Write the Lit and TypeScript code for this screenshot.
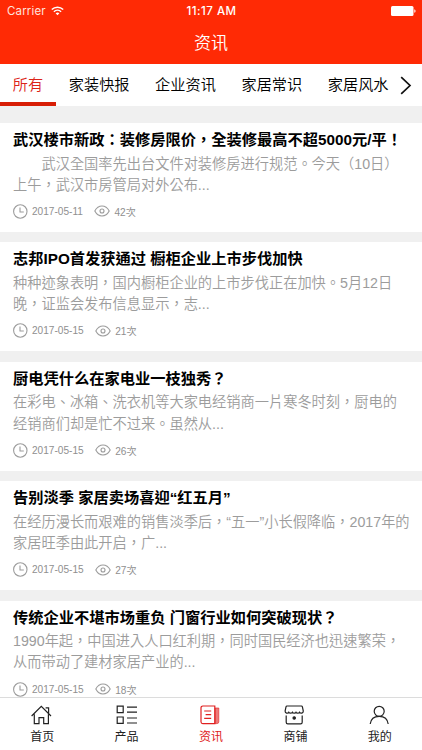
import { LitElement, html, css, svg } from "lit";
import { customElement, property } from "lit/decorators.js";
import { classMap } from "lit/directives/class-map.js";

interface Article {
  title: string;
  lines: string[];
  date: string;
  views: number;
}

const TABS = ["所有", "家装快报", "企业资讯", "家居常识", "家居风水"];

const ARTICLES: Article[] = [
  {
    title: "武汉楼市新政：装修房限价，全装修最高不超5000元/平！",
    lines: ["\u3000\u3000武汉全国率先出台文件对装修房进行规范。今天（10日）", "上午，武汉市房管局对外公布..."],
    date: "2017-05-11",
    views: 42,
  },
  {
    title: "志邦IPO首发获通过 橱柜企业上市步伐加快",
    lines: ["种种迹象表明，国内橱柜企业的上市步伐正在加快。5月12日", "晚，证监会发布信息显示，志..."],
    date: "2017-05-15",
    views: 21,
  },
  {
    title: "厨电凭什么在家电业一枝独秀？",
    lines: ["在彩电、冰箱、洗衣机等大家电经销商一片寒冬时刻，厨电的", "经销商们却是忙不过来。虽然从..."],
    date: "2017-05-15",
    views: 26,
  },
  {
    title: "告别淡季 家居卖场喜迎“红五月”",
    lines: ["在经历漫长而艰难的销售淡季后，“五一”小长假降临，2017年的", "家居旺季由此开启，广..."],
    date: "2017-05-15",
    views: 27,
  },
  {
    title: "传统企业不堪市场重负 门窗行业如何突破现状？",
    lines: ["1990年起，中国进入人口红利期，同时国民经济也迅速繁荣，", "从而带动了建材家居产业的..."],
    date: "2017-05-15",
    views: 18,
  },
];

const NAV = [
  {
    label: "首页",
    icon: svg`<path d="M.6 11 10.3 1.300 20 11M14.600 2.800h3v5.600M3.300 9.200v9.500h4.700v-6h4.700v6h4.700V9.200"/>`,
  },
  {
    label: "产品",
    icon: svg`<path d="M1.200 1.200h6v6.400h-6zM1.200 12h6v6.400h-6zM11 2.200h10M11 7.200h10M11 13h10M11 18h10"/>`,
  },
  {
    label: "资讯",
    icon: svg`<path d="M2.800 1h12v17.600h-12a1.800 1.800 0 0 1-1.800-1.800V2.800A1.800 1.800 0 0 1 2.800 1zM4.200 6h7M5.600 9.600h5.600M4.200 13.400h7"/><path d="M15 3h3.800v13.800a1.800 1.800 0 0 1-1.800 1.800h-2z" fill="currentColor" fill-opacity=".6" stroke-width=".6"/>`,
  },
  {
    label: "商铺",
    icon: svg`<path d="M3 1h14.400q.8 0 1 .8l.9 4.300a2 2 0 0 1-3.700 1.100 2.100 2.100 0 0 1-3.600 0 2.100 2.100 0 0 1-3.600 0 2.100 2.100 0 0 1-3.600 0A2 2 0 0 1 1.100 6.100L2 1.800Q2.200 1 3 1zM2.200 10.400v6.800q0 1.600 1.600 1.600h12.800q1.600 0 1.600-1.600v-6.800"/><circle cx="10.200" cy="13" r="1.200" fill="currentColor"/>`,
  },
  {
    label: "我的",
    icon: svg`<circle cx="10.200" cy="6.300" r="5"/><path d="M1.200 19c.6-5 4.200-7.700 9-7.700s8.400 2.700 9 7.700"/>`,
  },
];

@customElement("news-card")
export class NewsCard extends LitElement {
  @property({ attribute: false }) article!: Article;

  static styles = css`
    :host {
      display: block;
      box-sizing: border-box;
      height: 109px;
      padding: 5px 0 0 13px;
      background: #fff;
      white-space: nowrap;
      overflow: hidden;
      flex: none;
    }
    .title {
      height: 25.5px;
      line-height: 23px;
      font-size: 15.25px;
      font-weight: 700;
      color: #000;
    }
    .line {
      height: 21.4px;
      line-height: 21.4px;
      font-size: 14.22px;
      font-weight: 350;
      color: #9c9c9c;
    }
    .meta {
      display: flex;
      align-items: center;
      height: 16px;
      margin-top: 7.2px;
      font-size: 10.1px;
      color: #8f8f8f;
    }
    .meta svg {
      fill: none;
      stroke: #9c9c9c;
      stroke-width: 1.1;
      flex: none;
    }
    .date {
      margin: 0 11.5px 0 4px;
    }
    .views {
      margin-left: 4px;
    }
  `;

  render() {
    const a = this.article;
    return html`
      <div class="title">${a.title}</div>
      ${a.lines.map((l) => html`<div class="line">${l}</div>`)}
      <div class="meta">
        <svg width="15" height="15" viewBox="0 0 15 15">
          <circle cx="7.300" cy="7.500" r="6.700" />
          <path d="M7 3.600v4.400h3.800" />
        </svg>
        <span class="date">${a.date}</span>
        <svg width="16" height="12" viewBox="0 0 16 12">
          <path d="M.8 6C4.300-.600 11.700-.600 15.200 6 11.700 12.600 4.300 12.600.8 6z" />
          <circle cx="8" cy="6" r="2" />
        </svg>
        <span class="views">${a.views}次</span>
      </div>
    `;
  }
}

@customElement("app-root")
export class AppRoot extends LitElement {
  static styles = css`
    :host {
      display: flex;
      flex-direction: column;
      width: 422px;
      height: 750px;
      overflow: hidden;
      background: #f0f0f0;
      font-family: "Liberation Sans", "Noto Sans CJK TC", sans-serif;
    }
    .header {
      flex: none;
      height: 64px;
      background: #ff2a05;
      color: #fff;
    }
    .status {
      display: grid;
      grid-template-columns: 1fr auto 1fr;
      align-items: center;
      height: 22px;
      padding: 0 6px 0 7px;
      font: 400 11.5px/22px Inter, sans-serif;
    }
    .carrier {
      display: flex;
      align-items: center;
      gap: 5px;
      letter-spacing: 0.15px;
      color: #ffe3dd;
    }
    .time {
      font-weight: 500;
      letter-spacing: 0.5px;
    }
    .battery {
      justify-self: end;
      display: block;
    }
    .heading {
      height: 42px;
      line-height: 43px;
      text-align: center;
      font-size: 17px;
      font-weight: 350;
    }
    .tabs {
      flex: none;
      display: flex;
      height: 42px;
      background: #fff;
      overflow: hidden;
    }
    .tab {
      flex: none;
      box-sizing: border-box;
      height: 42px;
      padding: 0 12.8px;
      line-height: 42px;
      font-size: 15.2px;
      font-weight: 350;
      color: #000;
    }
    .tab.active {
      color: #dc2418;
      border-bottom: 4px solid #d81e06;
    }
    .more {
      flex: none;
      margin: 12px 0 0 -1px;
    }
    .list {
      flex: 1;
      min-height: 0;
      overflow: hidden;
      display: flex;
      flex-direction: column;
      gap: 10.4px;
      padding-top: 17px;
    }
    .nav {
      flex: none;
      box-sizing: border-box;
      display: flex;
      height: 53px;
      border-top: 1px solid #dcdcdc;
      background: #fff;
    }
    .item {
      flex: 1;
      display: flex;
      flex-direction: column;
      align-items: center;
      padding-top: 7px;
      font-size: 12px;
      line-height: 18px;
      color: #222;
    }
    .item.active {
      color: #e02020;
    }
    .item svg {
      display: block;
      margin: 0 1px 3px 0;
      fill: none;
      stroke: currentColor;
      stroke-width: 1.2;
    }
  `;

  render() {
    return html`
      <div class="header">
        <div class="status">
          <span class="carrier">
            Carrier
            <svg width="13" height="10" viewBox="0 0 13 10" fill="none" stroke="#fff" stroke-width="1.500">
              <path d="M.8 3.500a8.200 8.200 0 0 1 11.400 0M2.900 5.700a5.200 5.200 0 0 1 7.200 0" />
              <path d="M6.500 9.300 4.600 7.300a2.800 2.800 0 0 1 3.800 0z" fill="#fff" stroke="none" />
            </svg>
          </span>
          <span class="time">11:17 AM</span>
          <svg class="battery" width="25" height="10" viewBox="0 0 25 10" fill="#fff">
            <rect width="22.500" height="10" rx="1.500" />
            <path d="M23.300 3.200a1.900 1.900 0 0 1 0 3.600z" />
          </svg>
        </div>
        <div class="heading">资讯</div>
      </div>
      <div class="tabs">
        ${TABS.map((t, i) => html`<div class=${classMap({ tab: true, active: i === 0 })}>${t}</div>`)}
        <svg class="more" width="12" height="20" viewBox="0 0 12 20" fill="none" stroke="#111" stroke-width="1.700">
          <path d="M1.200 1.200 10 9.500 1.200 17.800" />
        </svg>
      </div>
      <div class="list">${ARTICLES.map((a) => html`<news-card .article=${a}></news-card>`)}</div>
      <div class="nav">
        ${NAV.map(
          (n, i) => html`<div class=${classMap({ item: true, active: i === 2 })}>
            <svg width="21" height="20" viewBox="0 0 21 20">${n.icon}</svg>
            <span>${n.label}</span>
          </div>`,
        )}
      </div>
    `;
  }
}
